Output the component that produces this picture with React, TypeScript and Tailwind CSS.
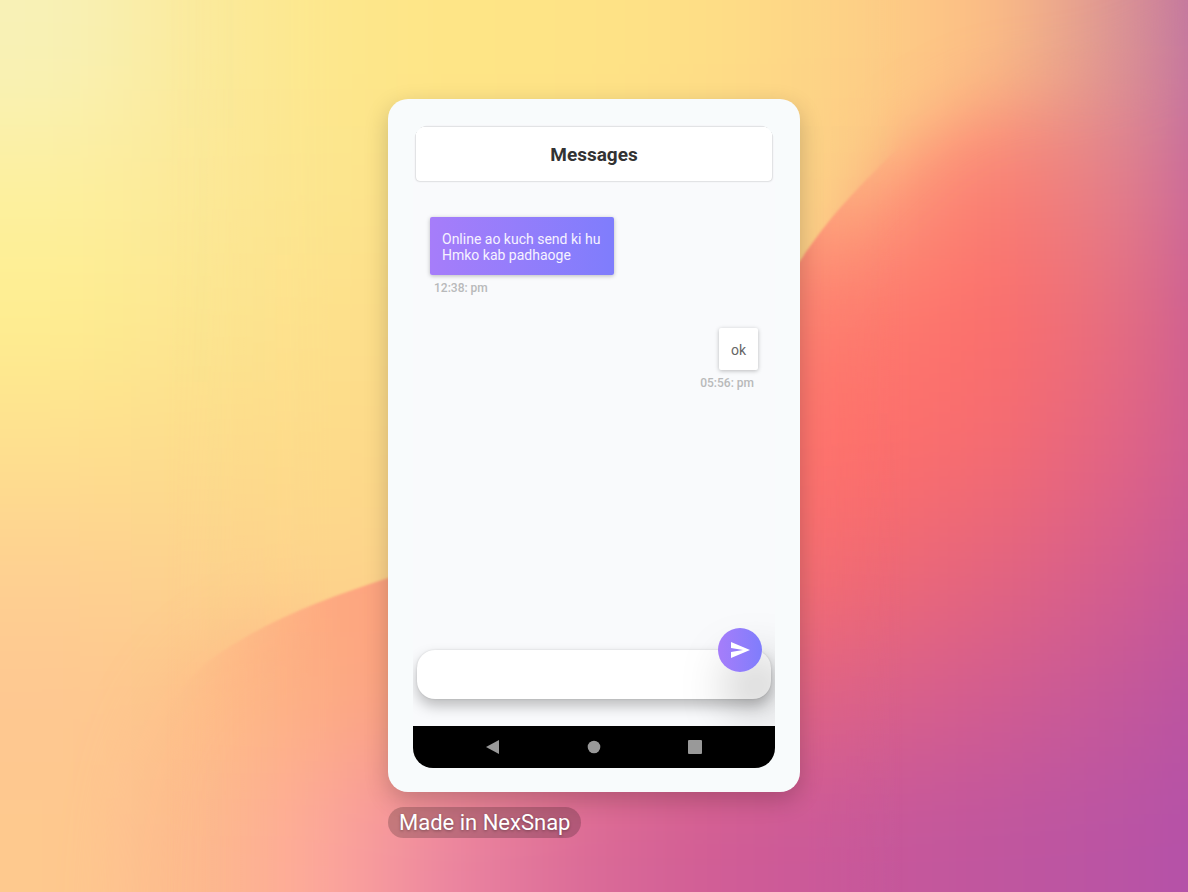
import React from 'react';

const COOL_MESH: string[][] = [
  ['#f8f1b6', '#fbea9c', '#fde78c', '#fee586', '#fee386', '#fedd86', '#fdd086', '#fdbd84', '#dc9494', '#b060a8'],
  ['#fdf09e', '#fce898', '#fce58d', '#fee288', '#fee086', '#fdd986', '#fccb86', '#fcb682', '#e48e88', '#b85ca6'],
  ['#feee90', '#fce691', '#fde08b', '#fddc89', '#fdd888', '#fdd286', '#fcc888', '#fca87c', '#e07884', '#bc589e'],
  ['#fee08e', '#fddd8c', '#fddb8a', '#fdd889', '#fdcc88', '#fdc886', '#fbb882', '#f5906d', '#e0658a', '#c45c9c'],
  ['#fed091', '#fdd38e', '#fdd48b', '#fdd68a', '#fdc088', '#fdb886', '#ea6876', '#df6282', '#d05c92', '#bc549e'],
  ['#fec791', '#fdc78c', '#fdc88c', '#fdc08a', '#fdb888', '#f09888', '#d6608a', '#c8598f', '#bb549c', '#b350a8'],
  ['#fec98e', '#fdbe92', '#fdb890', '#fdb090', '#e8a090', '#c85a98', '#c2569a', '#bb54a0', '#b551a8', '#b04fac'],
];

const WARM_MESH: string[][] = [
  ['#fdc084', '#fdc084', '#fdc084', '#fdc084', '#fdc084', '#fdc084', '#fdbc84', '#fcac80', '#dc9494', '#b060a8'],
  ['#fdc084', '#fdc084', '#fdb880', '#fdb080', '#fda87c', '#fda078', '#fda27c', '#fc7c70', '#e4808a', '#b858a6'],
  ['#fdb084', '#fdb084', '#fda880', '#fda080', '#fd9078', '#fd8070', '#fd7c6e', '#fd6e6a', '#e66e80', '#bc549e'],
  ['#fdb084', '#fdb084', '#fda880', '#fda080', '#fd8878', '#fd7870', '#ff706a', '#f66c70', '#e26484', '#c2589a'],
  ['#fdb084', '#fdb084', '#fea980', '#fd9a7a', '#fa8078', '#f87470', '#f26a72', '#e4657e', '#d55d8e', '#bb549e'],
  ['#fec48f', '#fec088', '#fdac82', '#f89880', '#e87082', '#e06480', '#dc6288', '#d25c90', '#c4589a', '#b350a6'],
  ['#fec48f', '#fdba8c', '#fda69c', '#ea82a0', '#da6a97', '#d05c96', '#c8589a', '#c0569e', '#ba54a4', '#b04fac'],
];

function Mesh({ colors }: { colors: string[][] }) {
  const lastRow = colors.length - 1;
  return (
    <g filter="url(#mesh-blur)">
      {colors.map((row, r) =>
        row.map((color, c) => {
          const left = c === 0 ? -300 : c * 132;
          const top = r === 0 ? -300 : r * 127;
          const right = c === row.length - 1 ? 1600 : (c + 1) * 132 + 1;
          const bottom = r === lastRow ? 1200 : (r + 1) * 127 + 1;
          return (
            <rect key={`${r}-${c}`} x={left} y={top} width={right - left} height={bottom - top} fill={color} />
          );
        }),
      )}
    </g>
  );
}

const RIDGE =
  'M130 1100 C120 860 120 740 205 664 C255 625 320 600 388 578 L600 490 L800 261 C826 222 846 200 880 166 C930 116 985 84 1040 84 C1100 90 1200 40 1400 -60 L1400 1100 Z';

function Wallpaper() {
  return (
    <svg
      aria-hidden="true"
      className="absolute inset-0 h-full w-full"
      viewBox="0 0 1188 892"
      preserveAspectRatio="xMidYMid slice"
    >
      <defs>
        <filter id="mesh-blur" filterUnits="userSpaceOnUse" x="-300" y="-300" width="1900" height="1500" colorInterpolationFilters="sRGB">
          <feGaussianBlur stdDeviation="56" />
        </filter>
        <filter id="edge-blur" filterUnits="userSpaceOnUse" x="-300" y="-300" width="1900" height="1600">
          <feGaussianBlur stdDeviation="32" />
        </filter>
        <filter id="edge-crisp" filterUnits="userSpaceOnUse" x="-300" y="-300" width="1900" height="1600">
          <feGaussianBlur stdDeviation="1" />
        </filter>
        <linearGradient id="near-center" gradientUnits="userSpaceOnUse" x1="0" y1="0" x2="1188" y2="0">
          <stop offset="0.14" stopColor="#000" />
          <stop offset="0.28" stopColor="#fff" />
          <stop offset="0.68" stopColor="#fff" />
          <stop offset="0.76" stopColor="#000" />
        </linearGradient>
        <mask id="soft-ridge" maskUnits="userSpaceOnUse" x="-300" y="-300" width="1900" height="1600">
          <path d={RIDGE} fill="#fff" filter="url(#edge-blur)" />
        </mask>
        <mask id="crisp-ridge" maskUnits="userSpaceOnUse" x="-300" y="-300" width="1900" height="1600">
          <path d={RIDGE} fill="#fff" filter="url(#edge-crisp)" />
        </mask>
        <mask id="center-band" maskUnits="userSpaceOnUse" x="0" y="0" width="1188" height="892">
          <rect width="1188" height="892" fill="url(#near-center)" />
        </mask>
      </defs>
      <Mesh colors={COOL_MESH} />
      <g mask="url(#soft-ridge)">
        <Mesh colors={WARM_MESH} />
      </g>
      <g mask="url(#center-band)">
        <Mesh colors={COOL_MESH} />
        <g mask="url(#crisp-ridge)">
          <Mesh colors={WARM_MESH} />
        </g>
      </g>
    </svg>
  );
}

function Message({ text, time, own = false }: { text: string; time: string; own?: boolean }) {
  return (
    <li className={own ? 'flex flex-col items-end' : 'flex flex-col items-start'}>
      <p
        className={
          own
            ? 'rounded-xs bg-white px-3 pt-[14px] pb-3 text-sm leading-4 text-[#666] shadow-[0_1px_4px_rgba(0,0,0,0.26)]'
            : 'rounded-xs bg-linear-to-r from-[#a67dfa] to-[#7f7dfc] pt-[14px] pr-[14px] pb-3 pl-3 text-sm leading-4 whitespace-pre-line text-[#f6f2ff] shadow-[0_1px_4px_rgba(0,0,0,0.26)]'
        }
      >
        {text}
      </p>
      <time className="mt-[5px] px-1 text-xs leading-4 font-medium text-[#b8b9ba]">{time}</time>
    </li>
  );
}

function Phone() {
  return (
    <section className="rounded-[20px] bg-[#f8fbfc] px-[25px] pt-[25px] pb-6 shadow-[0_8px_24px_rgba(0,0,0,0.2)]">
      <div className="flex flex-col overflow-hidden rounded-[20px] bg-[#f9fafc]">
        <header className="mx-[3px] mt-[3px] flex h-[54px] items-center justify-center rounded-sm bg-white pt-[2px] shadow-[0_0_2px_rgba(0,0,0,0.35)]">
          <h1 className="text-[19px] leading-6 font-bold text-[#333]">Messages</h1>
        </header>

        <ul className="flex min-h-[433px] flex-col gap-8 px-[17px] pt-9">
          <Message text={'Online ao kuch send ki hu\nHmko kab padhaoge'} time="12:38: pm" />
          <Message own text="ok" time="05:56: pm" />
        </ul>

        <form className="relative px-1 pt-9 pb-[27px]" onSubmit={(e) => e.preventDefault()}>
          <input
            type="text"
            aria-label="Message"
            className="block h-[49px] w-full rounded-[18px] bg-white pr-16 pl-5 text-sm text-[#333] shadow-[0_7px_14px_rgba(0,0,0,0.25),0_0_2px_rgba(0,0,0,0.15)] outline-none"
          />
          <button
            type="submit"
            aria-label="Send"
            className="absolute top-[14px] right-[13px] flex size-11 items-center justify-center rounded-full bg-linear-to-r from-[#a67dfa] to-[#7f7dfc] shadow-[16px_36px_52px_rgba(0,0,0,0.38)]"
          >
            <svg aria-hidden="true" viewBox="0 0 19 16" className="h-4 w-[19px]" fill="#fff">
              <path d="M0 0 19 8 0 16V10L12 8 0 6Z" />
            </svg>
          </button>
        </form>

        <nav className="relative flex h-[42px] items-center justify-between bg-black px-[73px]">
          <button type="button" aria-label="Back">
            <svg aria-hidden="true" viewBox="0 0 14 14" className="size-[14px]" fill="#999">
              <path d="M13 0V14L0 7Z" />
            </svg>
          </button>
          <button type="button" aria-label="Home">
            <svg aria-hidden="true" viewBox="0 0 14 14" className="size-[14px]" fill="#999">
              <circle cx="7" cy="7" r="6.3" />
            </svg>
          </button>
          <button type="button" aria-label="Recent apps">
            <svg aria-hidden="true" viewBox="0 0 14 14" className="size-[14px]" fill="#999">
              <rect width="14" height="14" rx="1" />
            </svg>
          </button>
        </nav>
      </div>
    </section>
  );
}

export default function App() {
  return (
    <main className="relative flex min-h-screen justify-center overflow-hidden bg-[#fdd48c] pt-[99px] pb-12 font-['Roboto',sans-serif]">
      <Wallpaper />
      <div className="relative flex w-full max-w-[412px] flex-col items-stretch gap-[15px]">
        <Phone />
        <p className="self-start rounded-full bg-black/20 px-[11px] py-[2px] text-[22px] leading-[27px] text-white [text-shadow:0_1px_3px_rgba(0,0,0,0.35)]">
          Made in NexSnap
        </p>
      </div>
    </main>
  );
}
